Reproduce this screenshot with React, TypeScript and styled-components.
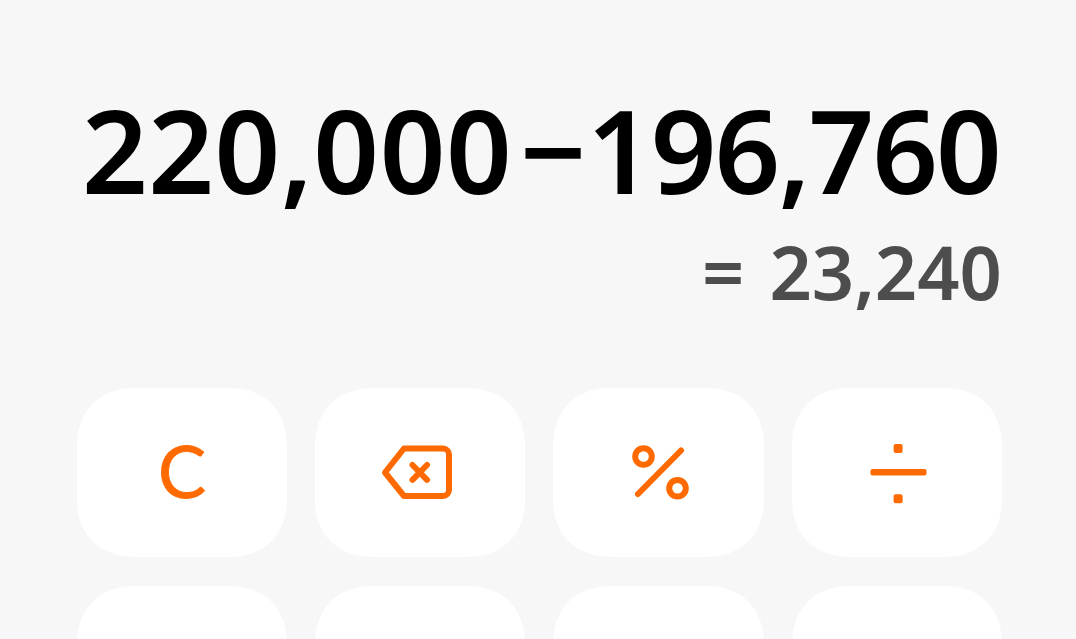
import React from 'react';
import styled, { createGlobalStyle } from 'styled-components';

const orange = '#ff6a00';

const GlobalStyle = createGlobalStyle`
  html, body {
    margin: 0;
    padding: 0;
    height: 100%;
    overflow: hidden;
    background: #f7f7f7;
  }
`;

const Screen = styled.div`
  width: 1076px;
  height: 639px;
  overflow: hidden;
  box-sizing: border-box;
  padding: 82px 74.2px 0 77px;
  background: #f7f7f7;
  font-family: "Noto Sans", Roboto, sans-serif;
`;

const Display = styled.div`
  display: flex;
  flex-direction: column;
  align-items: flex-end;
  margin-bottom: 71px;
`;

const Expression = styled.div`
  margin-right: 2px;
  font-size: 115px;
  line-height: 136px;
  font-weight: 600;
  color: #000;
  white-space: nowrap;
`;

const Segment = styled.span<{ $spacing: number }>`
  letter-spacing: ${({ $spacing }) => $spacing}px;
`;

const Minus = styled.span`
  margin: 0 1px 0 7.5px;
`;

const Result = styled.div`
  margin-top: 9px;
  font-size: 74px;
  line-height: 90px;
  font-weight: 600;
  word-spacing: 6px;
  color: #4d4d4d;
  white-space: nowrap;
`;

const Keypad = styled.div`
  display: grid;
  grid-template-columns: repeat(4, 1fr);
  grid-auto-rows: 169px;
  gap: 29px 28px;
`;

const Key = styled.button`
  display: flex;
  align-items: center;
  justify-content: center;
  padding: 0;
  border: 0;
  border-radius: 60px;
  corner-shape: superellipse(1.2);
  background: #fff;
  color: ${orange};
`;

const KeyLabel = styled.span`
  display: block;
  margin-bottom: 6px;
  font-family: Lato, sans-serif;
  font-size: 72px;
  line-height: 1;
  -webkit-text-stroke: 0.8px ${orange};
`;

const Icon = styled.svg`
  display: block;
  width: 80px;
  height: 80px;
  fill: none;
  stroke: ${orange};
`;

const BackspaceIcon = () => (
  <Icon viewBox="0 0 80 80" strokeWidth={6} strokeLinejoin="round" strokeLinecap="round">
    <path d="M24 15.5H63a6 6 0 0 1 6 6V57a6 6 0 0 1-6 6H24L5 39.5Z" />
    <path d="M32.5 32 47 46.8M47 32 32.5 46.8" />
  </Icon>
);

const PercentIcon = () => (
  <Icon viewBox="0 0 80 80" strokeWidth={6} strokeLinecap="round">
    <circle cx="24.5" cy="23.5" r="8.3" />
    <circle cx="58.5" cy="55.2" r="8.3" />
    <path d="M62 17.5 19 61" />
  </Icon>
);

const DivideIcon = () => (
  <Icon viewBox="0 0 80 80">
    <rect x="13.5" y="36" width="56" height="6.5" rx="2" fill={orange} stroke="none" />
    <rect x="36.6" y="11" width="9" height="9" rx="2" fill={orange} stroke="none" />
    <rect x="36.6" y="61.3" width="9" height="9" rx="2" fill={orange} stroke="none" />
  </Icon>
);

export default function App() {
  return (
    <>
      <GlobalStyle />
      <Screen>
        <Display>
          <Expression>
            <Segment $spacing={0.5}>220,000</Segment>
            <Minus>−</Minus>
            <Segment $spacing={-2}>196,760</Segment>
          </Expression>
          <Result>= 23,240</Result>
        </Display>
        <Keypad>
          <Key><KeyLabel>C</KeyLabel></Key>
          <Key><BackspaceIcon /></Key>
          <Key><PercentIcon /></Key>
          <Key><DivideIcon /></Key>
          <Key />
          <Key />
          <Key />
          <Key />
        </Keypad>
      </Screen>
    </>
  );
}
